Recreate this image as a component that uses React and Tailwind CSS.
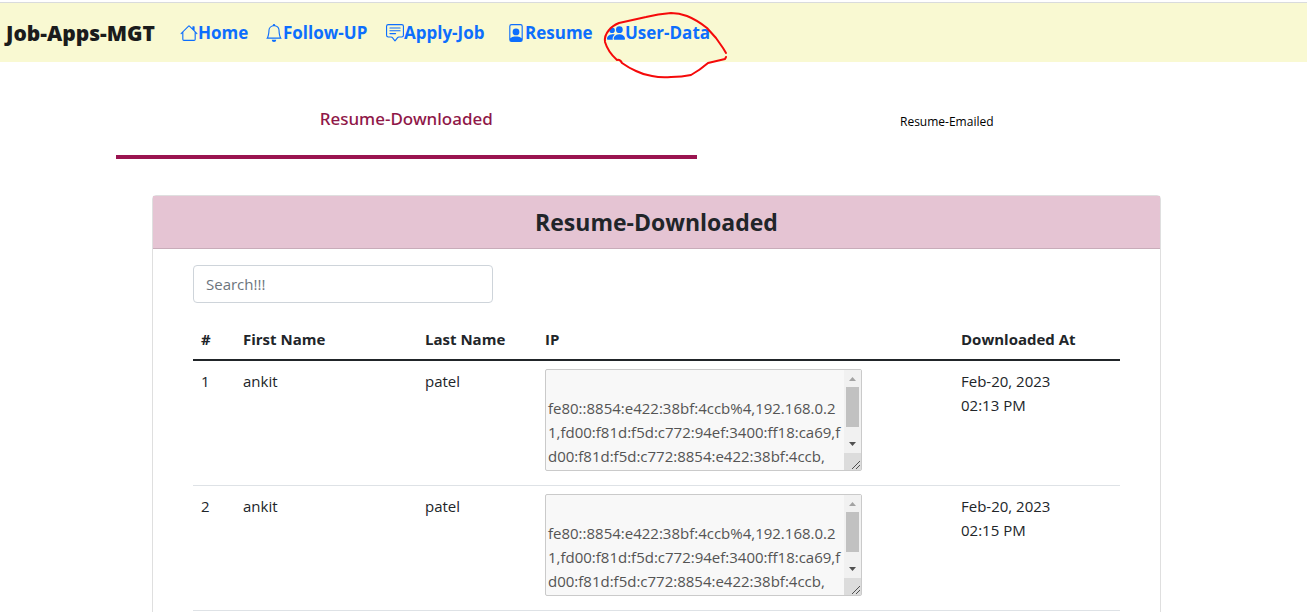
import { BsHouse, BsBell, BsChatSquareText, BsFilePerson, BsPeopleFill } from "react-icons/bs";

const links = [
  { label: "Home", Icon: BsHouse, width: "w-[69px]" },
  { label: "Follow-UP", Icon: BsBell, width: "w-[105px]" },
  { label: "Apply-Job", Icon: BsChatSquareText, width: "w-[105px]" },
  { label: "Resume", Icon: BsFilePerson, width: "w-[84px]" },
  { label: "User-Data", Icon: BsPeopleFill, width: "w-[102px]", marked: true },
];

const ips =
  "\nfe80::8854:e422:38bf:4ccb%4,192.168.0.21,fd00:f81d:f5d:c772:94ef:3400:ff18:ca69,fd00:f81d:f5d:c772:8854:e422:38bf:4ccb,";

const rows = [
  { id: 1, first: "ankit", last: "patel", date: "Feb-20, 2023", time: "02:13 PM" },
  { id: 2, first: "ankit", last: "patel", date: "Feb-20, 2023", time: "02:15 PM" },
];

function Marker() {
  return (
    <svg
      className="pointer-events-none absolute -top-3 -left-1.5 h-[72px] w-[128px]"
      viewBox="0 0 128 72"
      fill="none"
      stroke="#f50a0a"
      strokeWidth="2"
      strokeLinecap="round"
      strokeLinejoin="round"
      aria-hidden="true"
    >
      <path d="M125 44L122 39L115 29L106 19Q96 11 86 7Q78 4 70 4Q57 5 45 8L18 14Q11 17 8 21Q3 27 4 33Q7 43 16 51Q19 50 21 54Q28 59 35 62Q43 66 51 67Q60 69 70 68Q81 68 90 66Q99 61 107 54L124 50L125 48" />
    </svg>
  );
}

function ScrollRail() {
  return (
    <div className="pointer-events-none absolute inset-y-px right-px flex w-[17px] flex-col bg-[#f1f1f1]" aria-hidden="true">
      <svg className="h-[17px] w-full" viewBox="0 0 17 17" fill="#a3a3a3">
        <path d="M5 11h7L8.500 7z" />
      </svg>
      <div className="mx-0.5 h-10 bg-[#c1c1c1]" />
      <svg className="mt-auto h-[17px] w-full" viewBox="0 0 17 17" fill="#505050">
        <path d="M5 6h7L8.500 10z" />
      </svg>
      <svg className="h-[17px] w-full bg-[#dcdcdc]" viewBox="0 0 17 17" stroke="#505050">
        <path d="M8 16L16 8M12 16L16 12" />
      </svg>
    </div>
  );
}

export default function App() {
  return (
    <div className="min-h-screen bg-white font-['Open_Sans','Noto_Sans',sans-serif] text-[15px] leading-6 text-[#212529]">
      <header className="mt-0.5 flex h-[60px] items-center border-t border-[#d9dbdd] bg-[#f9f9d2] pl-1.5">
        <a href="#" className="w-[174px] shrink-0 text-[21px] font-extrabold text-[#1b1c1c]">
          Job-Apps-MGT
        </a>
        <nav className="flex gap-4" aria-label="Main">
          {links.map(({ label, Icon, width, marked }) => (
            <a key={label} href="#" className={`relative flex shrink-0 items-center whitespace-nowrap text-[17px] font-bold text-[#0d6efd] ${width}`}>
              <Icon className="h-[18px] w-[18px] shrink-0" aria-hidden="true" />
              {label}
              {marked && <Marker />}
            </a>
          ))}
        </nav>
      </header>

      <main className="pt-5 pr-[110px] pb-10 pl-29">
        <div className="flex" role="tablist" aria-label="Resume activity">
          <button type="button" role="tab" aria-selected="true" className="h-[77px] flex-[58] border-b-4 border-[#9a1450] font-['Noto_Sans',sans-serif] text-[17px] font-medium text-[#8f1748]">
            Resume-Downloaded
          </button>
          <button type="button" role="tab" aria-selected="false" className="h-[77px] flex-[50] border-b-4 border-transparent pt-1.5 text-xs text-black">
            Resume-Emailed
          </button>
        </div>

        <section className="mx-9 mt-9 rounded border border-[#dfdfdf] pb-4">
          <h1 className="border-b border-[#c8acb9] bg-[#e5c4d3] py-2.5 text-center text-[23px] leading-8 font-bold">
            Resume-Downloaded
          </h1>
          <div className="px-10 pt-4">
            <input
              type="search"
              aria-label="Search"
              placeholder="Search!!!"
              className="block h-[38px] w-[300px] rounded border border-[#ced4da] px-3 placeholder:text-[#6c757d]"
            />
            <table className="mt-4 w-full table-fixed text-left">
              <colgroup>
                <col className="w-[42px]" />
                <col className="w-[182px]" />
                <col className="w-[120px]" />
                <col className="w-[416px]" />
                <col />
              </colgroup>
              <thead>
                <tr className="border-b-2 border-[#212529]">
                  {["#", "First Name", "Last Name", "IP", "Downloaded At"].map((h) => (
                    <th key={h} scope="col" className="p-2 font-bold whitespace-nowrap">
                      {h}
                    </th>
                  ))}
                </tr>
              </thead>
              <tbody>
                {rows.map((r) => (
                  <tr key={r.id} className="border-b border-[#dee2e6] align-top">
                    <td className="p-2">{r.id}</td>
                    <td className="p-2">{r.first}</td>
                    <td className="p-2">{r.last}</td>
                    <td className="px-2 pt-2 pb-3.5">
                      <div className="relative w-[317px]">
                        <textarea
                          disabled
                          rows={4}
                          aria-label={`IP addresses for record ${r.id}`}
                          value={ips}
                          readOnly
                          className="block h-[102px] w-full resize-none rounded-xs border border-[#cacaca] bg-[#f8f8f8] py-0.5 pr-5 pl-0.5 break-all text-[#545454] [scrollbar-width:none]"
                        />
                        <ScrollRail />
                      </div>
                    </td>
                    <td className="p-2">
                      {r.date}
                      <br />
                      {r.time}
                    </td>
                  </tr>
                ))}
              </tbody>
            </table>
          </div>
        </section>
      </main>
    </div>
  );
}
